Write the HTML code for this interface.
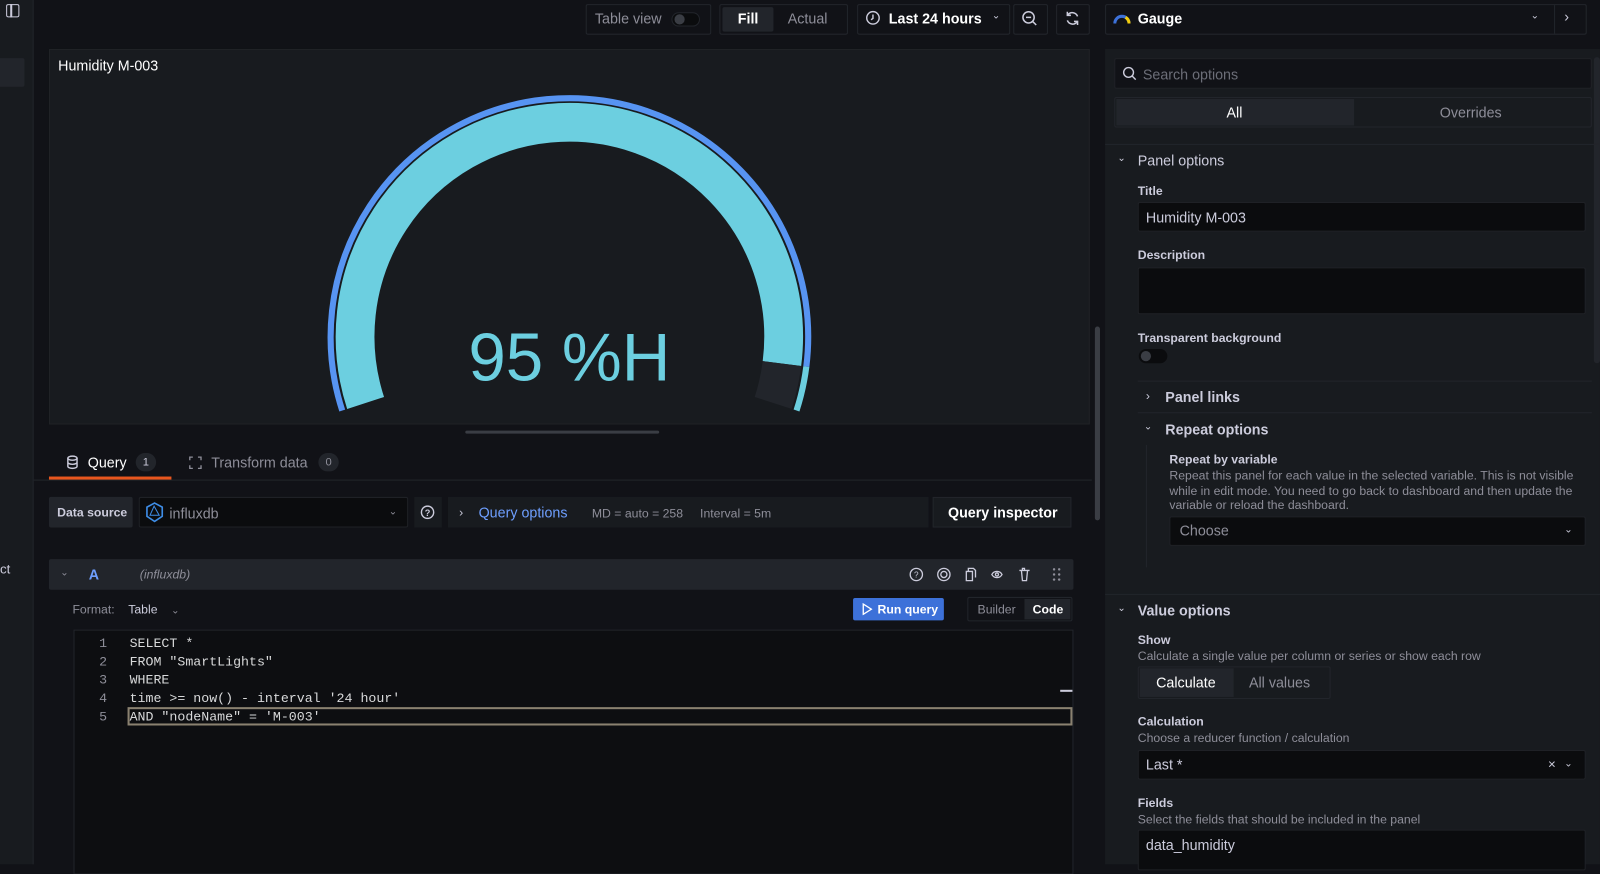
<!DOCTYPE html>
<html><head><meta charset="utf-8"><style>
*{box-sizing:border-box;margin:0;padding:0}
html,body{width:1600px;height:847px;overflow:hidden;background:#111217}
#w{position:absolute;left:0;top:0;width:1568px;height:830px;transform:scale(1.0204);transform-origin:0 0;color:#ccccdc;font-family:"Liberation Sans",sans-serif;font-size:14px}
.a{position:absolute}
.box{position:absolute;border:1px solid #22252b;border-radius:2px}
.t{position:absolute;white-space:nowrap}
.lbl{font-size:12px;font-weight:bold;color:#ccccdc}
.desc{font-size:12px;color:#8e8e99}
.inp{position:absolute;background:#0b0c0e;border:1px solid #1f2126;border-radius:2px}
.sep{position:absolute;height:1px;background:#22252b}
.mono{font-family:"Liberation Mono",monospace;font-size:13px;color:#d8d9da}
</style></head><body><div id="w">
<div class="a" style="left:0;top:0;width:33px;height:847px;background:#181b1f;border-right:1px solid #22252b"></div>
<div class="a" style="left:6px;top:4px;width:13px;height:13px;border:1.5px solid #ccccdc;border-radius:2px"></div>
<div class="a" style="left:10px;top:4px;width:1.5px;height:13px;background:#ccccdc"></div>
<div class="a" style="left:0;top:57px;width:24px;height:28px;background:#22252b;border-radius:0 2px 2px 0"></div>
<div class="t" style="left:0;top:550px;font-size:13px">ct</div>

<div class="box" style="left:574px;top:4px;width:123px;height:30px"></div>
<div class="t" style="left:583px;top:10px;color:#8e8e99">Table view</div>
<div class="a" style="left:658px;top:12px;width:28px;height:14px;border-radius:7px;background:#0b0c0e;border:1px solid #22252b"></div>
<div class="a" style="left:661px;top:14px;width:10px;height:10px;border-radius:5px;background:#3a3d44"></div>
<div class="box" style="left:705px;top:4px;width:126px;height:30px"></div>
<div class="a" style="left:708px;top:7px;width:50px;height:24px;background:#22252b;border-radius:2px"></div>
<div class="t" style="left:723px;top:10px;color:#fff;font-weight:bold">Fill</div>
<div class="t" style="left:772px;top:10px;color:#8e8e99">Actual</div>
<div class="box" style="left:840px;top:4px;width:150px;height:30px"></div>
<svg class="a" style="left:848px;top:10px" width="15" height="15" viewBox="0 0 16 16"><circle cx="8" cy="8" r="6.5" fill="none" stroke="#ccccdc" stroke-width="1.5"/><path d="M8 4.5V8.5L6 10" fill="none" stroke="#ccccdc" stroke-width="1.5"/></svg>
<div class="t" style="left:871px;top:10px;color:#fff;font-weight:bold">Last 24 hours</div>
<div class="t" style="left:972px;top:10px;font-size:10px">&#8964;</div>
<div class="box" style="left:993px;top:4px;width:34px;height:30px"></div>
<svg class="a" style="left:1001px;top:10px" width="16" height="16" viewBox="0 0 16 16"><circle cx="7" cy="7" r="5.5" fill="none" stroke="#ccccdc" stroke-width="1.5"/><path d="M11 11l3.5 3.5M4.5 7h5" stroke="#ccccdc" stroke-width="1.5"/></svg>
<div class="box" style="left:1035px;top:4px;width:33px;height:30px"></div>
<svg class="a" style="left:1043px;top:10px" width="16" height="16" viewBox="0 0 16 16"><path d="M13 6A5.5 5.5 0 0 0 3.5 4.5M3 10a5.5 5.5 0 0 0 9.5 1.5" fill="none" stroke="#ccccdc" stroke-width="1.5"/><path d="M3 1.5v3.5h3.5M13 14.5V11H9.5" fill="none" stroke="#ccccdc" stroke-width="1.5"/></svg>
<div class="box" style="left:1083px;top:4px;width:472px;height:30px;background:#111217"></div>
<svg class="a" style="left:1091px;top:11px" width="17" height="13" viewBox="0 0 17 13"><path d="M1.5 12A7 7 0 0 1 15.5 12" fill="none" stroke="#3d71d9" stroke-width="3"/><path d="M12 6A7 7 0 0 1 15.5 12" fill="none" stroke="#f2cc0c" stroke-width="3"/></svg>
<div class="t" style="left:1115px;top:10px;color:#fff;font-weight:bold">Gauge</div>
<div class="t" style="left:1500px;top:10px;font-size:10px">&#8964;</div>
<div class="a" style="left:1523px;top:5px;width:1px;height:28px;background:#22252b"></div>
<div class="t" style="left:1533px;top:8px;font-size:14px">&#8250;</div>

<div class="a" style="left:48px;top:48px;width:1020px;height:368px;background:#181b1f;border:1px solid #202226"></div>
<div class="t" style="left:57px;top:56px;color:#fff;font-size:14px">Humidity M-003</div>
<svg class="a" style="left:0;top:0" width="1070" height="420">
<path d="M335.4 402.3 A234 234 0 1 1 790.2 359.3" fill="none" stroke="#5794f2" stroke-width="6"/>
<path d="M790.2 359.3 A234 234 0 0 1 780.6 402.3" fill="none" stroke="#6ccfe0" stroke-width="6"/>
<path d="M358.3 394.9 A210 210 0 1 1 766.3 356.3" fill="none" stroke="#6ccfe0" stroke-width="38"/>
<path d="M766.3 356.3 A210 210 0 0 1 757.7 394.9" fill="none" stroke="#22252b" stroke-width="38"/>
<text x="558" y="373" text-anchor="middle" font-family="Liberation Sans, sans-serif" font-size="66" fill="#6ccfe0">95 %H</text>
</svg>
<div class="a" style="left:456px;top:422px;width:190px;height:3px;background:#3a3d44;border-radius:2px"></div>

<div class="sep" style="left:33px;top:470px;width:1037px"></div>
<svg class="a" style="left:65px;top:446px" width="12" height="14" viewBox="0 0 12 14"><ellipse cx="6" cy="3" rx="4.5" ry="2" fill="none" stroke="#ccccdc" stroke-width="1.4"/><path d="M1.5 3v8c0 1.1 2 2 4.5 2s4.5-.9 4.5-2V3M1.5 7c0 1.1 2 2 4.5 2s4.5-.9 4.5-2" fill="none" stroke="#ccccdc" stroke-width="1.4"/></svg>
<div class="t" style="left:86px;top:445px;color:#fff">Query</div>
<div class="a" style="left:133px;top:444px;width:20px;height:18px;border-radius:9px;background:#22252b;font-size:11px;text-align:center;line-height:18px">1</div>
<div class="a" style="left:48px;top:467px;width:120px;height:3px;background:#e8561e"></div>
<svg class="a" style="left:185px;top:447px" width="13" height="13" viewBox="0 0 13 13"><path d="M1 4V1h3M9 1h3v3M12 9v3H9M4 12H1V9" fill="none" stroke="#8e8e99" stroke-width="1.3"/></svg>
<div class="t" style="left:207px;top:445px;color:#8e8e99">Transform data</div>
<div class="a" style="left:312px;top:444px;width:20px;height:18px;border-radius:9px;background:#22252b;font-size:11px;text-align:center;line-height:18px;color:#8e8e99">0</div>

<div class="a" style="left:48px;top:487px;width:82px;height:30px;background:#22252b;border-radius:2px"></div>
<div class="t lbl" style="left:56px;top:495px">Data source</div>
<div class="inp" style="left:136px;top:487px;width:264px;height:30px"></div>
<svg class="a" style="left:142px;top:492px" width="19" height="20" viewBox="0 0 19 20"><path d="M9.5 1L17 5v9l-7.5 5L2 14V5z" fill="none" stroke="#3e8de6" stroke-width="1.6"/><path d="M5 13l4-9 5 9z" fill="none" stroke="#3e8de6" stroke-width="1"/></svg>
<div class="t" style="left:166px;top:495px;color:#8e8e99">influxdb</div>
<div class="t" style="left:381px;top:496px;font-size:10px;color:#8e8e99">&#8964;</div>
<div class="a" style="left:406px;top:487px;width:27px;height:30px;background:#181b1f"></div>
<svg class="a" style="left:412px;top:495px" width="14" height="14" viewBox="0 0 14 14"><circle cx="7" cy="7" r="6" fill="none" stroke="#ccccdc" stroke-width="1.4"/><text x="7" y="10.5" text-anchor="middle" font-size="9" font-weight="bold" fill="#ccccdc" font-family="Liberation Sans">?</text></svg>
<div class="a" style="left:439px;top:487px;width:471px;height:30px;background:#181b1f"></div>
<div class="t" style="left:450px;top:495px;font-size:12px">&#8250;</div>
<div class="t" style="left:469px;top:494px;color:#6e9fff">Query options</div>
<div class="t" style="left:580px;top:496px;font-size:12px;color:#8e8e99">MD = auto = 258&nbsp;&nbsp;&nbsp;&nbsp;&nbsp;Interval = 5m</div>
<div class="a" style="left:914px;top:487px;width:136px;height:30px;background:#181b1f;border:1px solid #22252b"></div>
<div class="t" style="left:929px;top:494px;color:#fff;font-weight:bold">Query inspector</div>

<div class="a" style="left:48px;top:548px;width:1004px;height:30px;background:#22252b;border-radius:2px"></div>
<div class="t" style="left:59px;top:556px;font-size:10px;color:#8e8e99">&#8964;</div>
<div class="t" style="left:87px;top:555px;color:#6e9fff;font-weight:bold">A</div>
<div class="t" style="left:137px;top:556px;font-size:12px;font-style:italic;color:#8e8e99">(influxdb)</div>
<svg class="a" style="left:890px;top:556px" width="156" height="14" viewBox="0 0 156 14">
<g fill="none" stroke="#ccccdc" stroke-width="1.3"><circle cx="8" cy="7" r="6"/><circle cx="35" cy="7" r="6"/><circle cx="35" cy="7" r="3"/><path d="M57 4h6v9h-6zM59 4V1h5l2 2v7"/><path d="M82 7c2-4 8-4 10 0c-2 4-8 4-10 0z"/><circle cx="87" cy="7" r="1.5"/><path d="M109 3h10M111 3l1 10h4l1-10M112 3V1h2v2"/></g>
<text x="8" y="10" text-anchor="middle" font-size="8" fill="#ccccdc" font-family="Liberation Sans">?</text>
<g fill="#8e8e99"><circle cx="143" cy="2" r="1.2"/><circle cx="148" cy="2" r="1.2"/><circle cx="143" cy="7" r="1.2"/><circle cx="148" cy="7" r="1.2"/><circle cx="143" cy="12" r="1.2"/><circle cx="148" cy="12" r="1.2"/></g></svg>

<div class="t" style="left:71px;top:590px;font-size:12px;color:#8e8e99">Format:&nbsp;&nbsp;&nbsp;&nbsp;<span style="color:#ccccdc">Table</span>&nbsp;&nbsp;&nbsp;&nbsp;<span style="font-size:10px">&#8964;</span></div>
<div class="a" style="left:836px;top:586px;width:89px;height:22px;background:#3d71d9;border-radius:2px"></div>
<svg class="a" style="left:845px;top:591px" width="10" height="12" viewBox="0 0 10 12"><path d="M1 1l8 5-8 5z" fill="none" stroke="#fff" stroke-width="1.3"/></svg>
<div class="t" style="left:860px;top:590px;font-size:12px;color:#fff;font-weight:bold">Run query</div>
<div class="box" style="left:948px;top:585px;width:103px;height:24px"></div>
<div class="a" style="left:1004px;top:587px;width:45px;height:20px;background:#22252b"></div>
<div class="t" style="left:958px;top:590px;font-size:12px;color:#8e8e99">Builder</div>
<div class="t" style="left:1012px;top:590px;font-size:12px;color:#fff;font-weight:bold">Code</div>

<div class="a" style="left:72px;top:617px;width:980px;height:240px;background:#0d0e11;border:1px solid #22252b"></div>
<div class="a" style="left:125px;top:693px;width:926px;height:18px;border:2px solid #8a8170"></div>
<div class="a" style="left:1039px;top:676px;width:12px;height:1.5px;background:#ccccdc"></div>
<div class="a mono" style="left:93px;top:622px;line-height:18px;color:#8e8e99;text-align:right;width:12px">1<br>2<br>3<br>4<br>5</div>
<div class="a mono" style="left:127px;top:622px;line-height:18px;white-space:pre">SELECT *
FROM "SmartLights"
WHERE
time &gt;= now() - interval '24 hour'
AND "nodeName" = 'M-003'</div>

<div class="a" style="left:1073px;top:320px;width:5px;height:190px;background:#3a3d44;border-radius:3px"></div>

<div class="a" style="left:1083px;top:48px;width:485px;height:799px;background:#181b1f"></div>
<div class="a" style="left:1562px;top:56px;width:6px;height:300px;background:#22252b;border-radius:3px"></div>
<div class="inp" style="left:1092px;top:57px;width:468px;height:30px;background:#111217"></div>
<svg class="a" style="left:1100px;top:65px" width="14" height="14" viewBox="0 0 14 14"><circle cx="6" cy="6" r="4.8" fill="none" stroke="#ccccdc" stroke-width="1.4"/><path d="M9.5 9.5L13 13" stroke="#ccccdc" stroke-width="1.4"/></svg>
<div class="t" style="left:1120px;top:65px;color:#6c6e78">Search options</div>
<div class="box" style="left:1092px;top:95px;width:468px;height:30px"></div>
<div class="a" style="left:1094px;top:97px;width:233px;height:26px;background:#22252b"></div>
<div class="t" style="left:1202px;top:102px;color:#fff">All</div>
<div class="t" style="left:1411px;top:102px;color:#8e8e99">Overrides</div>
<div class="sep" style="left:1083px;top:141px;width:485px"></div>

<div class="t" style="left:1095px;top:150px;font-size:10px">&#8964;</div>
<div class="t" style="left:1115px;top:149px;font-size:14px;color:#ccccdc">Panel options</div>
<div class="t lbl" style="left:1115px;top:180px">Title</div>
<div class="inp" style="left:1115px;top:198px;width:439px;height:29px"></div>
<div class="t" style="left:1123px;top:205px;color:#ccccdc">Humidity M-003</div>
<div class="t lbl" style="left:1115px;top:243px">Description</div>
<div class="inp" style="left:1115px;top:262px;width:439px;height:46px"></div>
<div class="t lbl" style="left:1115px;top:324px">Transparent background</div>
<div class="a" style="left:1116px;top:342px;width:28px;height:14px;border-radius:7px;background:#0b0c0e"></div>
<div class="a" style="left:1118px;top:344px;width:10px;height:10px;border-radius:5px;background:#3a3d44"></div>
<div class="sep" style="left:1115px;top:373px;width:445px"></div>
<div class="t" style="left:1123px;top:381px;font-size:12px">&#8250;</div>
<div class="t" style="left:1142px;top:381px;font-weight:bold">Panel links</div>
<div class="sep" style="left:1115px;top:404px;width:445px"></div>
<div class="t" style="left:1121px;top:413px;font-size:10px">&#8964;</div>
<div class="t" style="left:1142px;top:413px;font-weight:bold">Repeat options</div>
<div class="a" style="left:1123px;top:436px;width:1px;height:120px;background:#22252b"></div>
<div class="t lbl" style="left:1146px;top:443px">Repeat by variable</div>
<div class="a desc" style="left:1146px;top:459px;width:400px;line-height:14.5px">Repeat this panel for each value in the selected variable. This is not visible while in edit mode. You need to go back to dashboard and then update the variable or reload the dashboard.</div>
<div class="inp" style="left:1146px;top:506px;width:408px;height:29px"></div>
<div class="t" style="left:1156px;top:512px;color:#8e8e99">Choose</div>
<div class="t" style="left:1533px;top:514px;font-size:10px">&#8964;</div>
<div class="sep" style="left:1083px;top:582px;width:485px"></div>

<div class="t" style="left:1095px;top:591px;font-size:10px">&#8964;</div>
<div class="t" style="left:1115px;top:590px;font-weight:bold">Value options</div>
<div class="t lbl" style="left:1115px;top:620px">Show</div>
<div class="t desc" style="left:1115px;top:636px">Calculate a single value per column or series or show each row</div>
<div class="box" style="left:1115px;top:653px;width:189px;height:32px"></div>
<div class="a" style="left:1117px;top:655px;width:92px;height:28px;background:#22252b"></div>
<div class="t" style="left:1133px;top:661px;color:#fff">Calculate</div>
<div class="t" style="left:1224px;top:661px;color:#8e8e99">All values</div>
<div class="t lbl" style="left:1115px;top:700px">Calculation</div>
<div class="t desc" style="left:1115px;top:716px">Choose a reducer function / calculation</div>
<div class="inp" style="left:1115px;top:735px;width:439px;height:29px"></div>
<div class="t" style="left:1123px;top:741px;color:#ccccdc">Last *</div>
<div class="t" style="left:1517px;top:741px;font-size:13px">&#215;</div>
<div class="t" style="left:1533px;top:743px;font-size:10px">&#8964;</div>
<div class="t lbl" style="left:1115px;top:780px">Fields</div>
<div class="t desc" style="left:1115px;top:796px">Select the fields that should be included in the panel</div>
<div class="inp" style="left:1115px;top:813px;width:439px;height:40px"></div>
<div class="t" style="left:1123px;top:820px;color:#ccccdc">data_humidity</div>
</div></body></html>
